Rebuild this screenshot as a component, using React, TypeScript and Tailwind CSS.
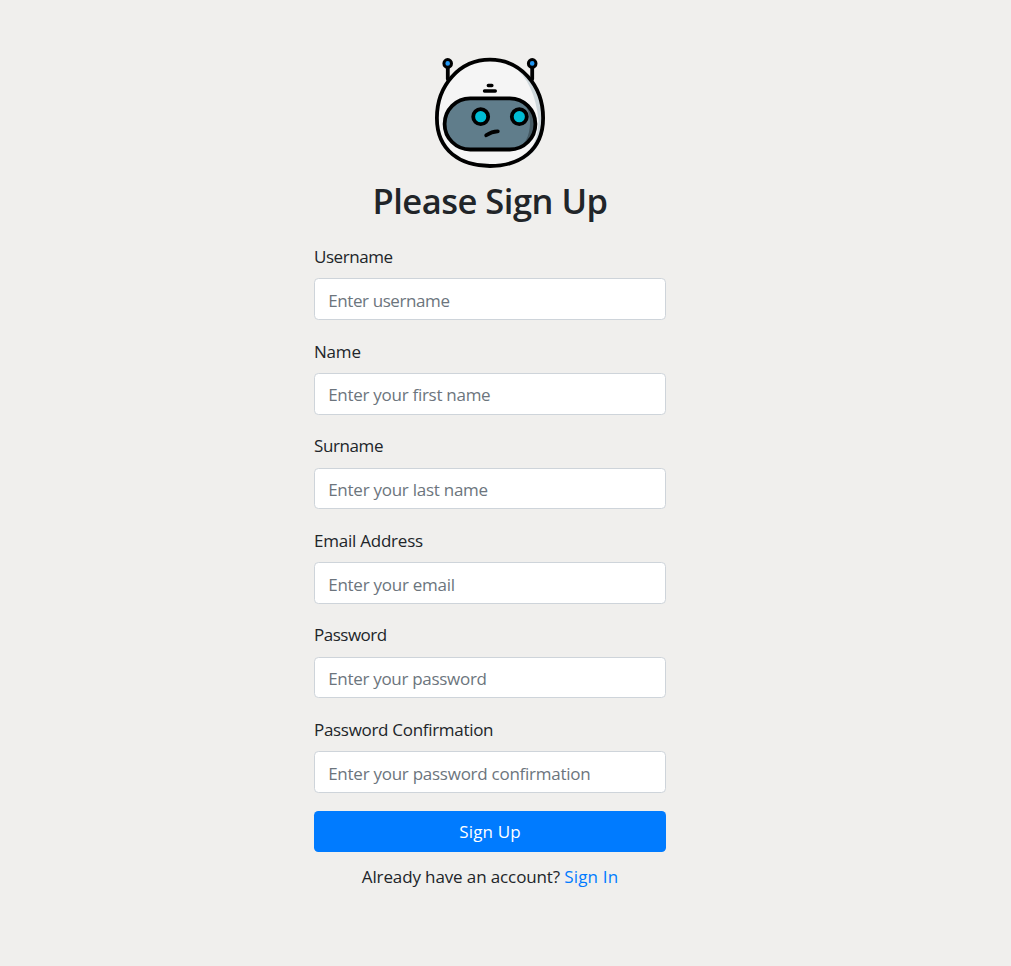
const fields = [
  { id: 'username', label: 'Username', hint: 'Enter username', type: 'text', lt: 'tracking-[-0.45px]', ht: 'tracking-[-0.4px]' },
  { id: 'name', label: 'Name', hint: 'Enter your first name', type: 'text', lt: 'tracking-[-0.2px]', ht: 'tracking-[-0.28px]' },
  { id: 'surname', label: 'Surname', hint: 'Enter your last name', type: 'text', lt: 'tracking-[-0.4px]', ht: 'tracking-[-0.26px]' },
  { id: 'email', label: 'Email Address', hint: 'Enter your email', type: 'email', lt: 'tracking-[-0.23px]', ht: 'tracking-[-0.25px]' },
  { id: 'password', label: 'Password', hint: 'Enter your password', type: 'password', lt: 'tracking-[-0.5px]', ht: 'tracking-[-0.3px]' },
  { id: 'confirm', label: 'Password Confirmation', hint: 'Enter your password confirmation', type: 'password', lt: 'tracking-[-0.3px]', ht: 'tracking-[-0.26px]' },
];

function Robot() {
  const head = 'M65 11.7C35 11.7 11.9 37 11.9 70C11.9 103 36 118 65 118S118.1 103 118.1 70C118.1 37 95 11.7 65 11.7Z';
  return (
    <svg className="block h-[110px] w-[110px] overflow-visible" viewBox="10 10 110 110" fill="none" stroke="#000" strokeWidth="3.8" strokeLinecap="round">
      <path d="M22.8 18V31M107.2 18V31" />
      <path d={head} fill="#f5f5f5" stroke="none" />
      <path d="M88 18C103 29 111 48 113.5 72C113 94 105 107 92 114C110 108 118.1 96 118.1 70C118.1 44 106 25 88 18Z" fill="#cfd8dc" stroke="none" />
      <path d={head} />
      <rect x="19.6" y="50.3" width="90.8" height="51.2" rx="25.6" fill="#607d8b" stroke="none" />
      <path d="M94 51C103 57 105 66 105 76C104.5 88 100 97 92 101.5C104 98 110.4 88 110.4 76C110.4 64 104 53 94 51Z" fill="#455a64" stroke="none" />
      <rect x="19.6" y="50.3" width="90.8" height="51.2" rx="25.6" />
      <circle cx="22.7" cy="15.4" r="3.8" fill="#2196f3" strokeWidth="3" />
      <circle cx="107.2" cy="15.4" r="3.8" fill="#2196f3" strokeWidth="3" />
      <circle cx="55.7" cy="68.7" r="7.5" fill="#00bcd4" />
      <circle cx="94.3" cy="68.7" r="7.5" fill="#00bcd4" />
      <path d="M61.2 87.3Q67 83.2 72.8 83.3" />
      <path d="M63.3 37.5H66.9M59.5 43H70.3" strokeWidth="3.4" />
    </svg>
  );
}

export default function App() {
  return (
    <main className="min-h-[966px] w-full bg-[#f0efed] pt-[58px] font-['Open_Sans',sans-serif] text-[17px] leading-[26.4px] text-[#212529]">
      <form className="ml-[314px] flex w-[352px] flex-col" onSubmit={(e) => e.preventDefault()}>
        <div className="flex justify-center">
          <Robot />
        </div>
        <h2 className="mt-[12px] mb-[21.2px] h-[42px] text-center text-[34.5px] leading-[42px] font-semibold whitespace-nowrap">
          <span className="tracking-[-0.5px]">Please Sign Up</span>
        </h2>
        {fields.map((f) => (
          <div key={f.id} className="mb-[17.6px] flex flex-col">
            <label htmlFor={f.id} className="mb-[8.8px] h-[26.4px] pt-[0.9px]">
              <span className={f.lt}>{f.label}</span>
            </label>
            <input
              id={f.id}
              type={f.type}
              placeholder={f.hint}
              className={`h-[41.8px] w-full rounded-[4.4px] border border-[#ced4da] bg-white px-[13.2px] pt-[2px] outline-none placeholder:text-[#6c757d] placeholder:opacity-100 ${f.ht}`}
            />
          </div>
        ))}
        <button type="submit" className="h-[41.2px] w-full rounded-[4.4px] bg-[#007bff] pt-px text-white">
          <span className="tracking-[0.15px]">Sign Up</span>
        </button>
        <p className="mt-[12.4px] text-center tracking-[-0.12px] whitespace-nowrap">
          Already have an account?{' '}
          <a href="#" className="tracking-[0.15px] text-[#007bff]">
            Sign In
          </a>
        </p>
      </form>
    </main>
  );
}
